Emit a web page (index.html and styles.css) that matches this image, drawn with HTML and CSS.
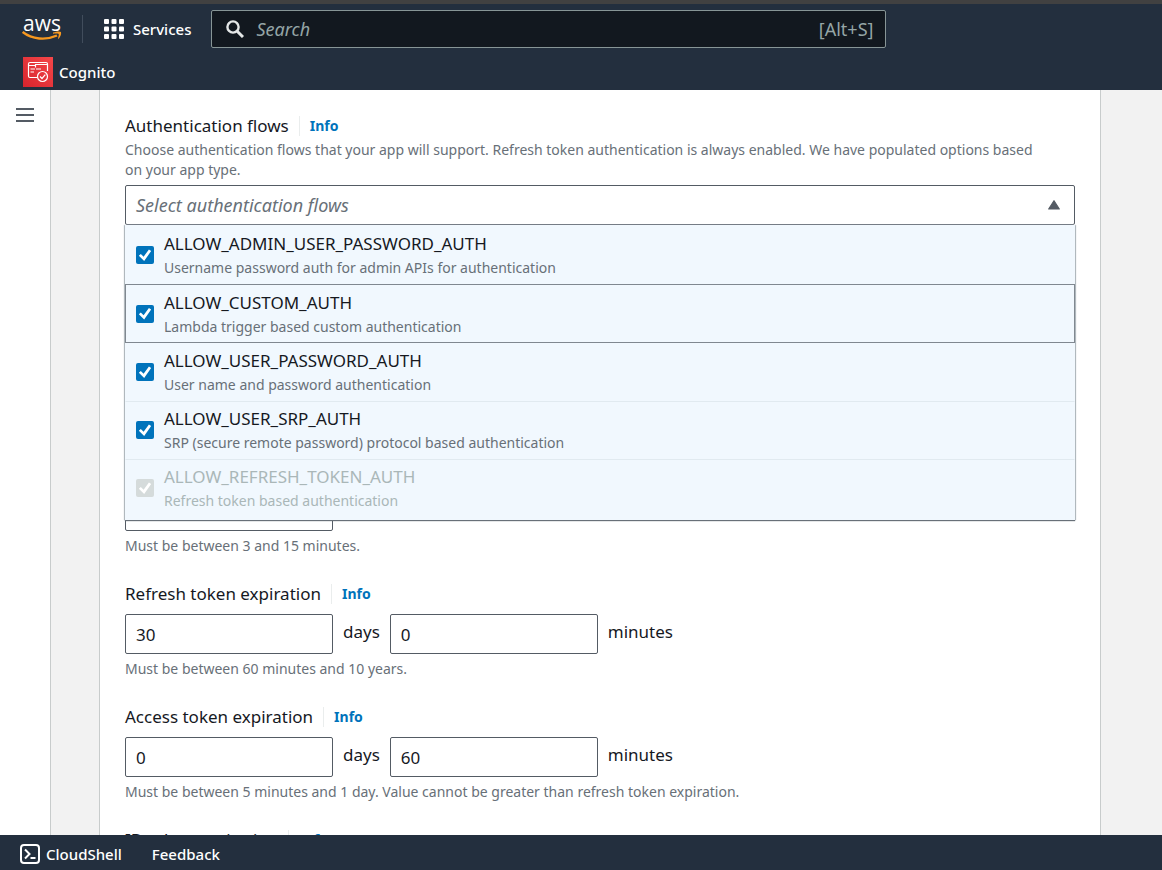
FILE: index.html
```html
<!DOCTYPE html>
<html lang="en">
<head>
<meta charset="utf-8">
<meta name="viewport" content="width=device-width, initial-scale=1">
<title>Cognito</title>
<link rel="stylesheet" href="styles.css">
</head>
<body>
<header class="topbar">
  <div class="topbar-row">
    <a class="logo" href="#" aria-label="AWS home">
      <span class="logo-text">aws</span>
      <svg class="logo-smile" viewBox="0 0 40 11" aria-hidden="true">
        <path d="M.6 1 C10 8.500 24 9.500 35 4.500" fill="none" stroke="#f7981f" stroke-width="2.400"/>
        <path d="M31 1.600 C35 .2 38 .2 39 1 C39.500 3 38.500 6 36 8.300 C36 6.500 37.200 4 36.700 3 C36 2.300 33 2.500 31 2.700 Z" fill="#f7981f"/>
      </svg>
    </a>
    <button class="services" type="button">
      <svg viewBox="0 0 20 20" width="20" height="20" fill="#fff" aria-hidden="true">
        <rect width="5" height="5" rx="1"/><rect x="7.500" width="5" height="5" rx="1"/><rect x="15" width="5" height="5" rx="1"/>
        <rect y="7.500" width="5" height="5" rx="1"/><rect x="7.500" y="7.500" width="5" height="5" rx="1"/><rect x="15" y="7.500" width="5" height="5" rx="1"/>
        <rect y="15" width="5" height="5" rx="1"/><rect x="7.500" y="15" width="5" height="5" rx="1"/><rect x="15" y="15" width="5" height="5" rx="1"/>
      </svg>
      Services
    </button>
    <label class="search">
      <svg viewBox="0 0 18 18" width="18" height="18" fill="none" stroke="#e4e7e7" stroke-width="2.400" aria-hidden="true">
        <circle cx="7" cy="7" r="5.600"/><path d="M11.200 11.200 L17 17" stroke-width="3"/>
      </svg>
      <input class="search-input" type="text" placeholder="Search" aria-label="Search">
      <span class="search-key">[Alt+S]</span>
    </label>
  </div>
  <a class="favorite" href="#">
    <svg viewBox="0 0 30 30" width="30" height="30" aria-hidden="true">
      <defs><linearGradient id="red" x1="0" y1="1" x2="1" y2="0"><stop offset="0" stop-color="#d6242d"/><stop offset="1" stop-color="#f54749"/></linearGradient></defs>
      <rect width="30" height="30" fill="url(#red)"/>
      <g fill="none" stroke="#fff" stroke-width="1.200">
        <path d="M14 20.500 H7 Q5.500 20.500 5.500 19 V7 Q5.500 5.500 7 5.500 H23 Q24.500 5.500 24.500 7 V14"/>
        <path d="M5.500 8.500 H12.500 M12.500 10.500 V7.500 H24.500 M7.500 12 H12 M7.500 15 H11 M13 12 H18"/>
        <circle cx="19.500" cy="19.500" r="5"/>
        <path d="M17 19.500 L19 21.500 L22.300 17.700"/>
      </g>
    </svg>
    Cognito
  </a>
</header>

<div class="workspace">
  <nav class="sidenav" aria-label="Service navigation">
    <button class="menu" type="button" aria-label="Open navigation">
      <svg viewBox="0 0 18 16" width="18" height="16" stroke="#545b64" stroke-width="2" aria-hidden="true"><path d="M0 2H18M0 8H18M0 14H18"/></svg>
    </button>
  </nav>
  <main class="content">
    <form class="card">
      <section class="field">
        <div class="field-head">
          <span class="field-label" id="flows-label">Authentication flows</span>
          <a class="info" href="#">Info</a>
        </div>
        <p class="description">Choose authentication flows that your app will support. Refresh token authentication is always enabled. We have populated options based on your app type.</p>
        <div class="multiselect">
          <button class="trigger" type="button" aria-expanded="true" aria-labelledby="flows-label">
            Select authentication flows
            <svg viewBox="0 0 12 10" width="12" height="10" aria-hidden="true"><path d="M6 .7 L11.300 9 H.7 Z" fill="#545b64" stroke="#545b64" stroke-width="1.200" stroke-linejoin="round"/></svg>
          </button>
          <div class="options">
            <label class="option">
              <input class="check" type="checkbox" checked>
              <span class="option-text"><span class="option-title">ALLOW_ADMIN_USER_PASSWORD_AUTH</span><span class="option-note">Username password auth for admin APIs for authentication</span></span>
            </label>
            <label class="option option-active">
              <input class="check" type="checkbox" checked>
              <span class="option-text"><span class="option-title">ALLOW_CUSTOM_AUTH</span><span class="option-note">Lambda trigger based custom authentication</span></span>
            </label>
            <label class="option">
              <input class="check" type="checkbox" checked>
              <span class="option-text"><span class="option-title">ALLOW_USER_PASSWORD_AUTH</span><span class="option-note">User name and password authentication</span></span>
            </label>
            <label class="option">
              <input class="check" type="checkbox" checked>
              <span class="option-text"><span class="option-title">ALLOW_USER_SRP_AUTH</span><span class="option-note">SRP (secure remote password) protocol based authentication</span></span>
            </label>
            <label class="option option-disabled">
              <input class="check" type="checkbox" checked disabled>
              <span class="option-text"><span class="option-title">ALLOW_REFRESH_TOKEN_AUTH</span><span class="option-note">Refresh token based authentication</span></span>
            </label>
          </div>
        </div>
      </section>

      <section class="field field-session">
        <div class="durations"><input class="number" type="text" aria-label="Session duration"></div>
        <p class="hint">Must be between 3 and 15 minutes.</p>
      </section>

      <section class="field">
        <div class="field-head">
          <span class="field-label">Refresh token expiration</span>
          <a class="info" href="#">Info</a>
        </div>
        <div class="durations">
          <input class="number" id="refresh-days" type="text" value="30"><label for="refresh-days">days</label>
          <input class="number" id="refresh-minutes" type="text" value="0"><label for="refresh-minutes">minutes</label>
        </div>
        <p class="hint">Must be between 60 minutes and 10 years.</p>
      </section>

      <section class="field">
        <div class="field-head">
          <span class="field-label">Access token expiration</span>
          <a class="info" href="#">Info</a>
        </div>
        <div class="durations">
          <input class="number" id="access-days" type="text" value="0"><label for="access-days">days</label>
          <input class="number" id="access-minutes" type="text" value="60"><label for="access-minutes">minutes</label>
        </div>
        <p class="hint">Must be between 5 minutes and 1 day. Value cannot be greater than refresh token expiration.</p>
      </section>

      <section class="field">
        <div class="field-head">
          <span class="field-label">ID token expiration</span>
          <a class="info" href="#">Info</a>
        </div>
      </section>
    </form>
  </main>
</div>

<footer class="footer">
  <button class="footer-item" type="button">
    <svg viewBox="0 0 20 20" width="20" height="20" fill="none" stroke="#fff" stroke-width="2" aria-hidden="true"><rect x="1" y="1" width="18" height="18" rx="3"/><path d="M5 5.500 L9.500 10 L5 14.500 M10.500 14 H15.500"/></svg>
    CloudShell
  </button>
  <a class="footer-item" href="#">Feedback</a>
</footer>
</body>
</html>
```
FILE: styles.css
```css
* { box-sizing: border-box; }

body {
  margin: 0;
  height: 100vh;
  display: flex;
  flex-direction: column;
  overflow: hidden;
  font-family: "Noto Sans", "Open Sans", sans-serif;
  font-size: 17px;
  line-height: 24px;
  color: #16191f;
  background: #f2f2f2;
}

p { margin: 0; }
a { text-decoration: none; }
svg { flex: none; display: block; }
button, input { font: inherit; color: inherit; }
button { border: 0; padding: 0; background: none; cursor: pointer; }

.topbar {
  flex: none;
  border-top: 4px solid #414141;
  background: #232f3e;
  color: #fff;
  font-size: 15px;
  font-weight: 500;
  padding: 6px 0 3px;
}

.topbar-row { display: flex; align-items: center; }

.logo {
  width: 83px;
  height: 28px;
  padding-left: 22px;
  border-right: 1px solid #414d5c;
  color: #fff;
}

.logo-text {
  display: block;
  padding-left: 1px;
  font-family: "Open Sans", "Noto Sans", sans-serif;
  font-size: 21px;
  font-weight: 500;
  line-height: 16px;
}

.logo-smile { width: 40px; height: 11px; }

.services {
  display: flex;
  align-items: center;
  gap: 9px;
  padding: 0 20px 0 21px;
}

.search {
  display: flex;
  align-items: center;
  gap: 12px;
  flex: 0 1 675px;
  height: 38px;
  padding: 0 12px 0 14px;
  border: 1px solid #879596;
  border-radius: 2px;
  background: #12181f;
  font-size: 18px;
  font-weight: 400;
  color: #95a5a6;
}

.search-input {
  flex: 1;
  min-width: 0;
  border: 0;
  padding: 0;
  background: none;
  outline: 0;
}

.search-input::placeholder { color: #95a5a6; font-style: italic; opacity: 1; }

.favorite {
  display: flex;
  align-items: center;
  gap: 6px;
  margin-top: 9px;
  padding-left: 23px;
  color: #fff;
}

.workspace { flex: 1; min-height: 0; display: flex; overflow: hidden; }

.sidenav {
  flex: none;
  width: 51px;
  padding: 15px 16px;
  border-right: 1px solid #c8cccc;
  background: #fff;
}

.content { flex: 1; min-width: 0; padding: 0 61px 0 48px; }

.card {
  min-height: 100%;
  padding: 24px 25px;
  border: solid #c8cccc;
  border-width: 0 1px;
  background: #fff;
}

.field { margin-bottom: 26px; }
.field-session { padding-top: 240px; }

.field-head { display: flex; align-items: center; gap: 10px; margin-bottom: 8px; }

.info {
  padding-left: 10px;
  border-left: 1px solid #eaeded;
  font-size: 14px;
  font-weight: 700;
  line-height: 20px;
  color: #0073bb;
}

.description, .hint, .option-note {
  font-size: 14px;
  line-height: 20px;
  color: #687078;
}

.description { padding-right: 30px; }
.field-head + .description { margin: -6px 0 5px; }
.hint { margin-top: 5px; }

.multiselect { position: relative; }

.trigger {
  display: flex;
  align-items: center;
  justify-content: space-between;
  width: 100%;
  height: 40px;
  padding: 0 14px 0 10px;
  border: 1px solid #545b64;
  border-radius: 2px;
  background: #fff;
  color: #687078;
  font-size: 18px;
  font-style: italic;
}

.options {
  position: absolute;
  z-index: 1;
  top: 100%;
  left: 0;
  right: 0;
  padding-top: 1px;
  background: #f1f8fe;
  box-shadow: 0 1px 1px #687078, 1px 0 1px #c0c7cc, -1px 0 1px #c0c7cc;
}

.option {
  display: flex;
  align-items: center;
  gap: 10px;
  height: 58px;
  padding: 0 10px;
  border: 1px solid transparent;
  border-top-color: #e1eaf0;
}

.option:first-child, .option-active + .option { border-top-color: transparent; }
.option-active { height: 59px; border-color: #808890; }
.option-disabled { height: 61px; padding-bottom: 3px; color: #aab7b8; }

.option-text { display: flex; flex-direction: column; gap: 3px; padding-top: 1px; }
.option-title { line-height: 22px; }
.option-disabled .option-note { color: #aab7b8; }

.check {
  appearance: none;
  flex: none;
  width: 18px;
  height: 18px;
  margin: 0;
  border-radius: 2px;
  background: #d5dbdb;
  display: grid;
  place-items: center;
}

.check:checked:enabled { background: #0073bb; }

.check:checked::after {
  content: "";
  width: 14px;
  height: 14px;
  background: #fff;
  clip-path: polygon(6% 56%, 20% 42%, 40% 62%, 78% 10%, 94% 22%, 44% 92%);
}

.durations { display: flex; align-items: center; gap: 10px; }

.number {
  width: 208px;
  height: 40px;
  padding: 0 10px;
  border: 1px solid #545b64;
  border-radius: 2px;
  background: #fff;
}

.durations label { padding-bottom: 4px; }

.footer {
  flex: none;
  display: flex;
  align-items: center;
  gap: 30px;
  height: 35px;
  padding: 2px 20px 0;
  background: #232f3e;
  color: #fff;
  font-size: 15px;
  font-weight: 500;
}

.footer-item { display: flex; align-items: center; gap: 6px; color: #fff; }
```
